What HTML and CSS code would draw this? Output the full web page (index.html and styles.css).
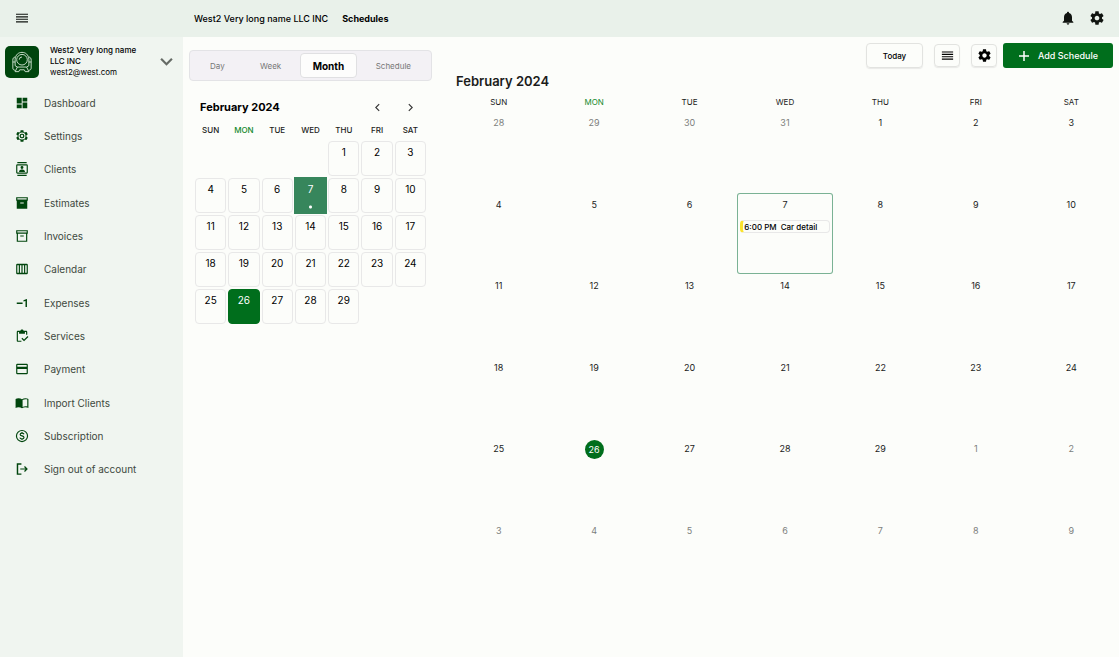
FILE: index.html
```html
<!DOCTYPE html>
<html lang="en">
<head>
  <meta charset="UTF-8">
  <meta name="viewport" content="width=device-width, initial-scale=1">
  <title>Schedules</title>
  <link rel="stylesheet" href="styles.css">
</head>
<body>
  <!-- shared icons -->
  <svg class="sprite" aria-hidden="true">
    <symbol id="gear" viewBox="0 0 24 24">
      <path d="M19.43 12.98c.04-.32.07-.64.07-.98 0-.34-.03-.66-.07-.98l2.11-1.65c.19-.15.24-.42.12-.64l-2-3.46c-.12-.22-.39-.3-.61-.22l-2.49 1c-.52-.4-1.08-.73-1.69-.98l-.38-2.65C14.46 2.18 14.25 2 14 2h-4c-.25 0-.46.18-.49.42l-.38 2.65c-.61.25-1.17.59-1.69.98l-2.49-1c-.23-.09-.49 0-.61.22l-2 3.46c-.13.22-.07.49.12.64l2.11 1.65c-.04.32-.07.65-.07.98 0 .33.03.66.07.98l-2.11 1.65c-.19.15-.24.42-.12.64l2 3.46c.12.22.39.3.61.22l2.49-1c.52.4 1.08.73 1.69.98l.38 2.65c.03.24.24.42.49.42h4c.25 0 .46-.18.49-.42l.38-2.65c.61-.25 1.17-.59 1.69-.98l2.49 1c.23.09.49 0 .61-.22l2-3.46c.12-.22.07-.49-.12-.64l-2.11-1.65zM12 15.5c-1.93 0-3.5-1.57-3.5-3.5s1.57-3.5 3.5-3.5 3.5 1.57 3.5 3.5-1.57 3.5-3.5 3.5z"/>
    </symbol>
    <symbol id="menu" viewBox="0 0 24 24">
      <path d="M3 5.500h18v1.800H3zM3 9.300h18v1.800H3zM3 13h18v1.800H3zM3 16.800h18v1.800H3z"/>
    </symbol>
  </svg>

  <header class="topbar">
    <button class="icon-btn" aria-label="Menu"><svg class="icon"><use href="#menu"/></svg></button>
    <nav class="crumbs" aria-label="Breadcrumb">
      <a href="#">West2 Very long name LLC INC</a>
      <a class="current" href="#">Schedules</a>
    </nav>
    <div class="topbar-actions">
      <button class="icon-btn" aria-label="Notifications">
        <svg class="icon" viewBox="0 0 24 24"><path d="M12 22c1.1 0 2-.9 2-2h-4c0 1.1.89 2 2 2zm6-6v-5c0-3.07-1.64-5.64-4.5-6.32V4c0-.83-.67-1.5-1.5-1.5s-1.5.67-1.5 1.5v.68C7.63 5.36 6 7.92 6 11v5l-2 2v1h16v-1l-2-2z"/></svg>
      </button>
      <button class="icon-btn" aria-label="Settings"><svg class="icon"><use href="#gear"/></svg></button>
    </div>
  </header>

  <div class="layout">
    <aside class="sidebar">
      <button class="account">
        <span class="avatar">
          <svg viewBox="0 0 24 24">
            <circle cx="12" cy="9.500" r="5.800"/>
            <path d="M4.500 9C5 4 8 1.500 12 1.500S19 4 19.500 9M4.500 6.500C2.500 7 2 8 2 10v8.500c0 1.500.8 2.500 2.500 2.500M19.500 6.500c2 .5 2.500 1.500 2.500 3.500v8.500c0 1.500-.8 2.500-2.500 2.500M4.500 9v7l2.500 1.500h10l2.500-1.500V9M7 17.500l-2.500 5h4l1-2h5l1 2h4l-2.500-5M2 12h2.500M19.500 12H22M9 9.500a3 3 0 0 1 3-3"/>
          </svg>
        </span>
        <span class="account-text">
          <span class="account-name">West2 Very long name LLC INC</span>
          <span class="account-mail">west2@west.com</span>
        </span>
        <svg class="chevron" viewBox="0 0 12 12"><path d="M1 3.500l5 5 5-5"/></svg>
      </button>

      <nav aria-label="Main">
        <ul class="menu">
          <li><a href="#"><svg viewBox="0 0 24 24"><path d="M3 13h8.500V3H3v10zm0 8h8.500v-6.500H3V21zm10 0h8V11h-8v10zm0-18v6.500h8V3h-8z"/></svg>Dashboard</a></li>
          <li><a href="#"><svg viewBox="0 0 24 24"><use href="#gear"/><circle class="ring" cx="12" cy="12" r="5"/><circle cx="12" cy="12" r="4"/><circle class="hole" cx="12" cy="12" r="2"/></svg>Settings</a></li>
          <li><a href="#"><svg viewBox="0 0 24 24"><path fill-rule="evenodd" d="M4 0h16v2H4zM4 22h16v2H4zM4 4h16a2 2 0 0 1 2 2v12a2 2 0 0 1-2 2H4a2 2 0 0 1-2-2V6a2 2 0 0 1 2-2zm0 2v12h16V6H4zm8 6a2.500 2.500 0 1 0 0-5 2.500 2.500 0 0 0 0 5zm5 5v-1c0-2-3.300-3-5-3s-5 1-5 3v1h10z"/></svg>Clients</a></li>
          <li><a href="#"><svg viewBox="0 0 24 24"><path fill-rule="evenodd" d="M2 2h20v6h-1v14H3V8H2V2zm2 2v2h16V4H4zm5 7v2h6v-2H9z"/></svg>Estimates</a></li>
          <li><a href="#"><svg viewBox="0 0 24 24"><path fill-rule="evenodd" d="M2 2h20v6h-1v14H3V8H2V2zm2 2v2h16V4H4zm1 4v12h14V8H5zm4 3v2h6v-2H9z"/></svg>Invoices</a></li>
          <li><a href="#"><svg viewBox="0 0 24 24"><path fill-rule="evenodd" d="M4 3h16a2 2 0 0 1 2 2v14a2 2 0 0 1-2 2H4a2 2 0 0 1-2-2V5a2 2 0 0 1 2-2zm0 2.500v13h2.500v-13H4zm4.500 0v13H11v-13H8.500zm4.500 0v13h2.500v-13H13zm4.500 0v13H20v-13h-2.500z"/></svg>Calendar</a></li>
          <li><a href="#"><svg viewBox="0 0 24 24"><path d="M3 11h10v2.500H3zM20.500 19H18V8.500l-3.500 1V7.300L20 5h.5z"/></svg>Expenses</a></li>
          <li><a href="#"><svg viewBox="0 0 24 24"><path d="M5 5h2v3h10V5h2v5h2V5c0-1.100-.9-2-2-2h-4.180C14.400 1.840 13.300 1 12 1s-2.400.84-2.820 2H5c-1.100 0-2 .9-2 2v15c0 1.100.9 2 2 2h6v-2H5V5zM21.500 12l-6 6-3-3L11 16.500l4.500 4.500 7.500-7.500z"/></svg>Services</a></li>
          <li><a href="#"><svg viewBox="0 0 24 24"><path fill-rule="evenodd" d="M4 3h16a2 2 0 0 1 2 2v14a2 2 0 0 1-2 2H4a2 2 0 0 1-2-2V5a2 2 0 0 1 2-2zm0 2v3h16V5H4zm0 7v7h16v-7H4z"/></svg>Payment</a></li>
          <li><a href="#"><svg viewBox="0 0 24 24"><path fill-rule="evenodd" d="M12 5.500C9 3.500 4 3.500 1 5v15.500c3-1.500 8-1.500 11 .5 3-2 8-2 11-.5V5c-3-1.500-8-1.500-11 .5zM21 18c-2.500-.7-6-.2-8 1V7c2-1.200 5.500-1.700 8-1v12z"/></svg>Import Clients</a></li>
          <li><a href="#"><svg viewBox="0 0 24 24"><circle class="line" cx="12" cy="12" r="9.500"/><path class="line" d="M15.500 9c-.4-1.300-1.700-2-3.500-2s-3.200.9-3.200 2.400c0 3.400 6.600 1.600 6.600 5 0 1.600-1.500 2.600-3.400 2.600s-3.300-.8-3.700-2.300M12 5v2M12 17v2"/></svg>Subscription</a></li>
          <li><a href="#"><svg viewBox="0 0 24 24"><path d="M3 2h8v2.500H5.500v15H11V22H3zM17 7l-1.500 1.500L18 11H9v2h9l-2.500 2.500L17 17l5-5z"/></svg>Sign out of account</a></li>
        </ul>
      </nav>
    </aside>

    <main class="content">
      <section class="side-panel">
        <div class="tabs">
          <button>Day</button>
          <button>Week</button>
          <button class="active">Month</button>
          <button>Schedule</button>
        </div>

        <div class="mini">
          <div class="mini-head">
            <h2>February 2024</h2>
            <button aria-label="Previous month"><svg viewBox="0 0 8 8"><path d="M5.500 1l-3 3 3 3"/></svg></button>
            <button aria-label="Next month"><svg viewBox="0 0 8 8"><path d="M2.500 1l3 3-3 3"/></svg></button>
          </div>
          <table class="mini-table">
            <thead>
              <tr><th>SUN</th><th class="now">MON</th><th>TUE</th><th>WED</th><th>THU</th><th>FRI</th><th>SAT</th></tr>
            </thead>
            <tbody>
              <tr><td></td><td></td><td></td><td></td><td><button>1</button></td><td><button>2</button></td><td><button>3</button></td></tr>
              <tr><td><button>4</button></td><td><button>5</button></td><td><button>6</button></td><td class="picked"><button>7</button></td><td><button>8</button></td><td><button>9</button></td><td><button>10</button></td></tr>
              <tr><td><button>11</button></td><td><button>12</button></td><td><button>13</button></td><td><button>14</button></td><td><button>15</button></td><td><button>16</button></td><td><button>17</button></td></tr>
              <tr><td><button>18</button></td><td><button>19</button></td><td><button>20</button></td><td><button>21</button></td><td><button>22</button></td><td><button>23</button></td><td><button>24</button></td></tr>
              <tr><td><button>25</button></td><td><button class="today">26</button></td><td><button>27</button></td><td><button>28</button></td><td><button>29</button></td><td></td><td></td></tr>
            </tbody>
          </table>
        </div>
      </section>

      <section class="schedule">
        <div class="toolbar">
          <button class="box-btn today-btn">Today</button>
          <button class="box-btn" aria-label="List view"><svg class="icon"><use href="#menu"/></svg></button>
          <button class="box-btn" aria-label="Schedule settings"><svg class="icon"><use href="#gear"/></svg></button>
          <button class="add-btn"><svg viewBox="0 0 12 12"><path d="M6 1v10M1 6h10"/></svg>Add Schedule</button>
        </div>
        <h1>February 2024</h1>
        <table class="month">
          <thead>
            <tr><th>SUN</th><th class="now">MON</th><th>TUE</th><th>WED</th><th>THU</th><th>FRI</th><th>SAT</th></tr>
          </thead>
          <tbody>
            <tr><td class="out">28</td><td class="out">29</td><td class="out">30</td><td class="out">31</td><td>1</td><td>2</td><td>3</td></tr>
            <tr>
              <td>4</td><td>5</td><td>6</td>
              <td class="selected">7<a class="event" href="#"><span>6:00 PM</span> <span>Car detail</span></a></td>
              <td>8</td><td>9</td><td>10</td>
            </tr>
            <tr><td>11</td><td>12</td><td>13</td><td>14</td><td>15</td><td>16</td><td>17</td></tr>
            <tr><td>18</td><td>19</td><td>20</td><td>21</td><td>22</td><td>23</td><td>24</td></tr>
            <tr><td>25</td><td><span class="today-dot">26</span></td><td>27</td><td>28</td><td>29</td><td class="out">1</td><td class="out">2</td></tr>
            <tr><td class="out">3</td><td class="out">4</td><td class="out">5</td><td class="out">6</td><td class="out">7</td><td class="out">8</td><td class="out">9</td></tr>
          </tbody>
        </table>
      </section>
    </main>
  </div>
</body>
</html>
```
FILE: styles.css
```css
* {
  box-sizing: border-box;
}
body {
  margin: 0;
  min-height: 100vh;
  display: flex;
  flex-direction: column;
  font-family: Inter, sans-serif;
  font-size: 9px;
  color: #1b1c1b;
  background: #fcfdfa;
}
button {
  font: inherit;
  color: inherit;
  padding: 0;
  border: 0;
  background: none;
  cursor: pointer;
}
a {
  color: inherit;
  text-decoration: none;
}
h1, h2 {
  margin: 0;
  font-size: 13px;
  font-weight: 600;
}
h2 {
  font-size: 11px;
  font-weight: 700;
  color: #000;
}
.sprite {
  display: none;
}
.icon {
  display: block;
  width: 16px;
  height: 16px;
  fill: #101410;
}

/* top bar */
.topbar {
  display: flex;
  align-items: center;
  height: 37px;
  padding: 0 14px 1px;
  background: #e9f1ea;
}
.crumbs {
  display: flex;
  gap: 14px;
  margin-left: 164px;
  font-weight: 500;
  color: #000;
}
.crumbs .current {
  font-weight: 700;
}
.topbar-actions {
  display: flex;
  gap: 13px;
  margin-left: auto;
}

.layout {
  flex: 1;
  display: flex;
}

/* sidebar */
.sidebar {
  width: 183px;
  flex-shrink: 0;
  background: #f0f5f0;
}
.account {
  display: flex;
  align-items: center;
  width: 100%;
  height: 49px;
  padding: 0 10px 0 5px;
  text-align: left;
}
.avatar {
  display: flex;
  align-items: center;
  justify-content: center;
  width: 34px;
  height: 32px;
  border-radius: 5px;
  background: #00450d;
}
.avatar svg {
  width: 22px;
  height: 22px;
  fill: none;
  stroke: #d5e8d6;
  stroke-width: 1;
}
.account-text {
  flex: 1;
  margin-left: 11px;
  font-size: 8px;
  line-height: 11px;
  color: #000;
}
.account-name {
  display: block;
  width: 100px;
  font-weight: 500;
}
.account-mail {
  display: block;
}
.chevron {
  width: 13px;
  height: 13px;
  fill: none;
  stroke: #666b66;
  stroke-width: 2;
}
.menu {
  display: grid;
  grid-auto-rows: 1fr;
  height: 400px;
  margin: 0;
  padding: 0;
  list-style: none;
}
.menu a {
  display: flex;
  align-items: center;
  gap: 15px;
  height: 100%;
  padding-left: 15px;
  font-size: 10px;
  color: #404940;
}
.menu svg {
  width: 14px;
  height: 14px;
  fill: #00450d;
}
.menu .line {
  fill: none;
  stroke: #00450d;
  stroke-width: 2;
}
.menu .ring {
  fill: none;
  stroke: #f0f5f0;
  stroke-width: 2;
}
.menu .hole {
  fill: #f0f5f0;
}

/* left panel */
.content {
  flex: 1;
  display: flex;
  min-width: 0;
}
.side-panel {
  width: 249px;
  flex-shrink: 0;
  padding: 13px 0 0 6px;
}
.tabs {
  display: flex;
  justify-content: space-between;
  align-items: center;
  height: 31px;
  padding: 0 3px;
  border: 1px solid #e3e3e6;
  border-radius: 4px;
  background: #f3f1f5;
  color: #777;
  font-size: 8px;
}
.tabs button {
  padding: 0 17px;
}
.tabs .active {
  height: 25px;
  padding: 0 12px;
  border: 1px solid #e0e0e2;
  border-radius: 4px;
  background: #fdfdfc;
  color: #000;
  font-size: 10px;
  font-weight: 700;
}
.mini {
  padding: 17px 5px 0;
}
.mini-head {
  display: flex;
  align-items: center;
  height: 18px;
  padding-left: 6px;
}
.mini-head h2 {
  flex: 1;
}
.mini-head button {
  width: 33px;
  height: 18px;
}
.mini-head svg {
  display: block;
  width: 9px;
  height: 9px;
  margin: auto;
  fill: none;
  stroke: #333;
}
table {
  width: 100%;
  table-layout: fixed;
  border-collapse: collapse;
}
th, td {
  padding: 0;
  text-align: center;
  vertical-align: top;
}
th {
  font-size: 8px;
  font-weight: 500;
  vertical-align: middle;
}
.now {
  color: #14892c;
}
.mini-table th {
  height: 24px;
  padding-top: 4px;
}
.mini-table td {
  height: 37px;
  padding: 1px;
  color: #000;
}
.mini-table td button {
  display: block;
  width: 100%;
  height: 35px;
  padding-bottom: 14px;
  border: 1px solid #e8e8e8;
  border-radius: 4px;
  font-size: 10px;
}
.mini-table .today {
  border-color: #006e1c;
  background: #006e1c;
  color: #fff;
}
.mini-table .picked {
  background: radial-gradient(circle at 50% 30px, #fff 1px, #37865c 2px);
}
.mini-table .picked button {
  border-color: transparent;
  color: #fff;
}

/* month view */
.schedule {
  flex: 1;
  min-width: 0;
  padding: 6px 0 0 19px;
}
.toolbar {
  display: flex;
  justify-content: flex-end;
  align-items: center;
  height: 25px;
  padding-right: 6px;
}
.box-btn {
  display: flex;
  align-items: center;
  justify-content: center;
  width: 26px;
  height: 23px;
  margin-left: 11px;
  border: 1px solid #e2e3e0;
  border-radius: 4px;
  box-shadow: 0 1px 1px #e9e9e7;
  color: #000;
}
.box-btn .icon {
  width: 15px;
  height: 15px;
  fill: #000;
}
.today-btn {
  width: 57px;
  height: 25px;
  font-size: 8px;
  font-weight: 500;
}
.add-btn {
  display: flex;
  align-items: center;
  justify-content: center;
  gap: 8px;
  width: 110px;
  height: 25px;
  margin-left: 6px;
  border-radius: 3px;
  background: #006e1c;
  color: #fff;
  font-weight: 500;
}
.add-btn svg {
  width: 12px;
  height: 12px;
  fill: none;
  stroke: #fff;
  stroke-width: 1.5;
}
.schedule h1 {
  height: 24px;
  padding-left: 5px;
  line-height: 26px;
}
.month {
  height: 508px;
}
.month th {
  height: 19px;
  font-weight: 400;
}
.month td {
  height: 81px;
  padding-top: 6px;
  font-size: 9px;
  line-height: 12px;
}
.month .out {
  color: #7d7f7d;
}
.month .selected {
  border-radius: 3px;
  box-shadow: inset 0 0 0 1px #7ab294;
}
.event {
  display: flex;
  gap: 4px;
  height: 13px;
  margin: 9px 3px 0;
  border: 1px solid #e8e8e8;
  border-left: 3px solid #fbe32d;
  border-radius: 4px;
  padding-left: 1px;
  font-size: 8px;
  font-weight: 500;
  white-space: nowrap;
  color: #000;
}
.today-dot {
  display: block;
  width: 19px;
  height: 19px;
  margin: -3px auto 0;
  border-radius: 50%;
  background: #006e1c;
  color: #fff;
  line-height: 19px;
}
```
